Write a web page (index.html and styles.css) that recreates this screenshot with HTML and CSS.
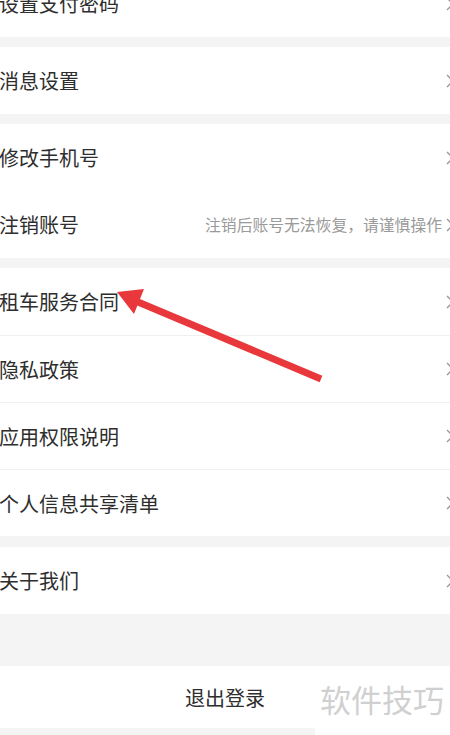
FILE: index.html
```html
<!DOCTYPE html>
<html lang="zh-CN">
<head>
<meta charset="utf-8">
<title>设置</title>
<link rel="stylesheet" href="styles.css">
</head>
<body>
<div class="page">
  <section class="group first">
    <div class="row"><span class="label">设置支付密码</span><span class="chev"><svg width="8" height="14" viewBox="0 0 8 14"><path d="M1 1 L7 7 L1 13" fill="none" stroke="#999" stroke-width="1.3"/></svg></span></div>
  </section>
  <section class="group">
    <div class="row"><span class="label">消息设置</span><span class="chev"><svg width="8" height="14" viewBox="0 0 8 14"><path d="M1 1 L7 7 L1 13" fill="none" stroke="#999" stroke-width="1.3"/></svg></span></div>
  </section>
  <section class="group">
    <div class="row"><span class="label">修改手机号</span><span class="chev"><svg width="8" height="14" viewBox="0 0 8 14"><path d="M1 1 L7 7 L1 13" fill="none" stroke="#999" stroke-width="1.3"/></svg></span></div>
    <div class="row"><span class="label">注销账号</span><span class="hint">注销后账号无法恢复，请谨慎操作</span><span class="chev"><svg width="8" height="14" viewBox="0 0 8 14"><path d="M1 1 L7 7 L1 13" fill="none" stroke="#999" stroke-width="1.3"/></svg></span></div>
  </section>
  <section class="group g4">
    <div class="row"><span class="label">租车服务合同</span><span class="chev"><svg width="8" height="14" viewBox="0 0 8 14"><path d="M1 1 L7 7 L1 13" fill="none" stroke="#999" stroke-width="1.3"/></svg></span></div>
    <div class="row line"><span class="label">隐私政策</span><span class="chev"><svg width="8" height="14" viewBox="0 0 8 14"><path d="M1 1 L7 7 L1 13" fill="none" stroke="#999" stroke-width="1.3"/></svg></span></div>
    <div class="row line"><span class="label">应用权限说明</span><span class="chev"><svg width="8" height="14" viewBox="0 0 8 14"><path d="M1 1 L7 7 L1 13" fill="none" stroke="#999" stroke-width="1.3"/></svg></span></div>
    <div class="row line"><span class="label">个人信息共享清单</span><span class="chev"><svg width="8" height="14" viewBox="0 0 8 14"><path d="M1 1 L7 7 L1 13" fill="none" stroke="#999" stroke-width="1.3"/></svg></span></div>
  </section>
  <section class="group g5">
    <div class="row"><span class="label">关于我们</span><span class="chev"><svg width="8" height="14" viewBox="0 0 8 14"><path d="M1 1 L7 7 L1 13" fill="none" stroke="#999" stroke-width="1.3"/></svg></span></div>
  </section>
  <div class="logout">退出登录</div>
</div>
<svg class="arrow" width="450" height="735" viewBox="0 0 450 735">
  <line x1="138" y1="302" x2="321" y2="379" stroke="#e8383b" stroke-width="7" stroke-linecap="butt"/>
  <polygon points="117,292 144,289 134,314" fill="#e8383b"/>
</svg>
<div class="watermark">软件技巧</div>
</body>
</html>
```

FILE: styles.css
```css
html, body {
  margin: 0;
  padding: 0;
}
body {
  width: 450px;
  height: 735px;
  overflow: hidden;
  background: #f4f4f4;
  font-family: "Noto Sans CJK SC", "Noto Sans", sans-serif;
  position: relative;
}
.page {
  display: flex;
  flex-direction: column;
}
.group {
  background: #fff;
  margin-bottom: 10px;
}
.group.first {
  margin-top: -30px;
}
.group.g4 {
  margin-bottom: 11px;
}
.group.g5 {
  margin-bottom: 52px;
}
.row {
  height: 67px;
  box-sizing: border-box;
  display: flex;
  align-items: center;
  margin-left: -1px;
}
.row.line {
  border-top: 1px solid #f0f0f0;
}
.label {
  font-size: 20px;
  color: #2e2e2e;
  flex: 1;
}
.hint {
  font-size: 15.8px;
  color: #9a9a9a;
  margin-right: 4px;
}
.chev {
  width: 8px;
  display: flex;
  align-items: center;
  margin-right: -4px;
}
.chev svg {
  display: block;
}
.logout {
  height: 62px;
  background: #fff;
  display: flex;
  align-items: center;
  justify-content: center;
  font-size: 20px;
  color: #2e2e2e;
}
.arrow {
  position: absolute;
  left: 0;
  top: 0;
  pointer-events: none;
}
.watermark {
  position: absolute;
  left: 315px;
  top: 676px;
  width: 135px;
  height: 59px;
  background: #fff;
  color: #d0d0d0;
  font-size: 31px;
  line-height: 46px;
  padding-left: 5px;
  box-sizing: border-box;
}
```
